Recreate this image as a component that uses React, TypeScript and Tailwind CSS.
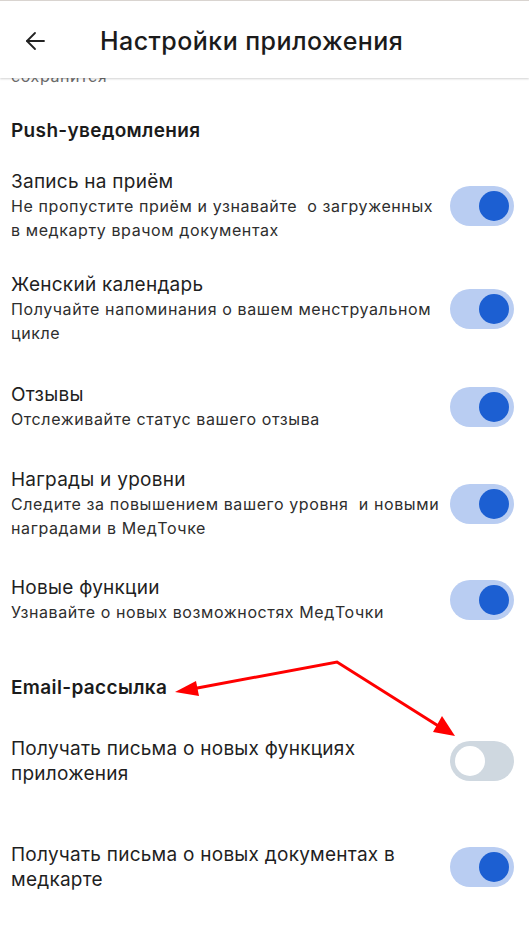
import React from "react";

type Row = { title: string[]; sub?: string[]; on: boolean; mt: string };

const font = { fontFamily: "Inter, 'Noto Sans', sans-serif" };

function Toggle({ on }: { on: boolean }) {
  return (
    <div
      className={`flex h-[40px] w-[64px] shrink-0 items-center rounded-full px-[5px] ${
        on ? "justify-end bg-[#b9cdf2]" : "justify-start bg-[#cfd8e0]"
      }`}
    >
      <div className={`h-[30px] w-[30px] rounded-full ${on ? "bg-[#1c5fd2]" : "bg-white"}`} />
    </div>
  );
}

function SettingRow({ row }: { row: Row }) {
  return (
    <div className={`flex items-center justify-between pl-[11px] pr-[15px] ${row.mt}`}>
      <div className="whitespace-pre">
        {row.title.map((t) => (
          <p key={t} className="text-[19px] leading-[25px] tracking-[0.25px] text-[#1f1f1f]">{t}</p>
        ))}
        {row.sub?.map((s) => (
          <p key={s} className="text-[16px] leading-[24px] tracking-[0.6px] text-[#2e2e2e]">{s}</p>
        ))}
      </div>
      <Toggle on={row.on} />
    </div>
  );
}

const push: Row[] = [
  { title: ["Запись на приём"], sub: ["Не пропустите приём и узнавайте  о загруженных", "в медкарту врачом документах"], on: true, mt: "mt-[26px]" },
  { title: ["Женский календарь"], sub: ["Получайте напоминания о вашем менструальном", "цикле"], on: true, mt: "mt-[30px]" },
  { title: ["Отзывы"], sub: ["Отслеживайте статус вашего отзыва"], on: true, mt: "mt-[37px]" },
  { title: ["Награды и уровни"], sub: ["Следите за повышением вашего уровня  и новыми", "наградами в МедТочке"], on: true, mt: "mt-[36px]" },
  { title: ["Новые функции"], sub: ["Узнавайте о новых возможностях МедТочки"], on: true, mt: "mt-[35px]" },
];

const email: Row[] = [
  { title: ["Получать письма о новых функциях", "приложения"], on: false, mt: "mt-[36px]" },
  { title: ["Получать письма о новых документах в", "медкарте"], on: true, mt: "mt-[56px]" },
];

export default function App() {
  return (
    <div className="relative h-[949px] w-[529px] overflow-hidden bg-white" style={font}>
      <header className="relative z-10 flex h-[78px] items-center border-t border-[#d9d4d0] bg-white shadow-[0_1px_2px_rgba(0,0,0,0.18)]">
        <svg className="ml-[25px] mt-[2px]" width="20" height="20" viewBox="0 0 20 20" fill="none" stroke="#222" strokeWidth="1.8" strokeLinecap="round" strokeLinejoin="round">
          <path d="M19 10H2" />
          <path d="M10 2 2 10l8 8" />
        </svg>
        <h1 className="ml-[55px] mt-[4px] text-[25px] font-medium tracking-[0.45px] text-[#1b1b1b]">Настройки приложения</h1>
      </header>
      <div className="h-[7px] overflow-hidden pl-[11px]">
        <p className="-mt-[12px] text-[16px] leading-[20px] tracking-[0.6px] text-[#6b6b6b]">сохранится</p>
      </div>

      <h2 className="ml-[11px] mt-[34px] text-[19px] font-semibold leading-[24px] tracking-[0.35px] text-[#1b1b1b]">Push-уведомления</h2>
      {push.map((r) => (
        <SettingRow key={r.title[0]} row={r} />
      ))}

      <h2 className="ml-[11px] mt-[52px] text-[19px] font-semibold leading-[24px] tracking-[0.35px] text-[#1b1b1b]">Email-рассылка</h2>
      {email.map((r) => (
        <SettingRow key={r.title[0]} row={r} />
      ))}

      {/* annotation arrows */}
      <svg className="pointer-events-none absolute left-0 top-0" width="529" height="949" viewBox="0 0 529 949">
        <polyline points="192,689 337,662 440,727" fill="none" stroke="#ff0000" strokeWidth="3" strokeLinejoin="miter" />
        <polygon points="175,692 196,681 199,696" fill="#ff0000" />
        <polygon points="455,736 433,732 442,716" fill="#ff0000" />
      </svg>
    </div>
  );
}
